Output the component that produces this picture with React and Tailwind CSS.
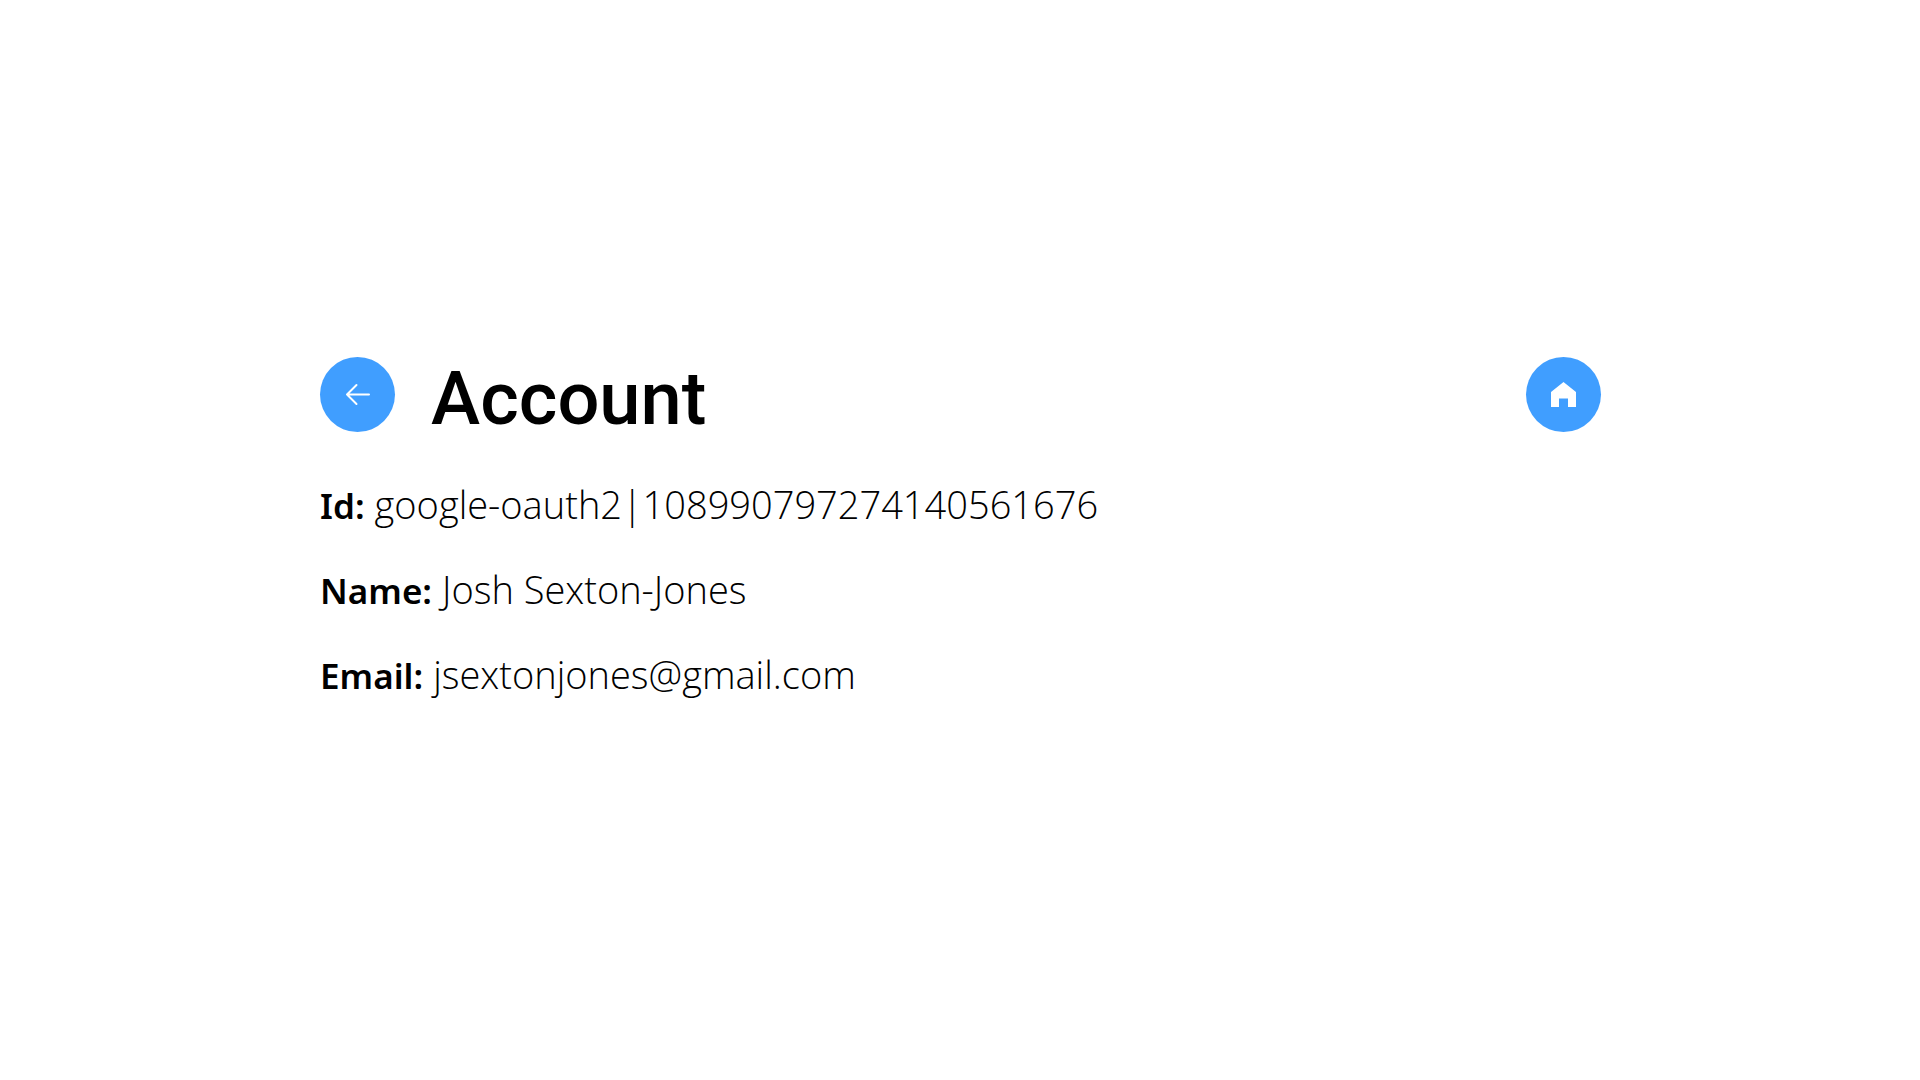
const details = [
  { label: 'Id:', value: 'google-oauth2|108990797274140561676' },
  { label: 'Name:', value: 'Josh Sexton-Jones' },
  { label: 'Email:', value: 'jsextonjones@gmail.com' },
];

function RoundButton({ label, children }) {
  return (
    <button
      type="button"
      aria-label={label}
      className="flex size-[75px] shrink-0 items-center justify-center rounded-full bg-[#409eff] text-white"
    >
      {children}
    </button>
  );
}

export default function App() {
  return (
    <main className="flex min-h-screen flex-col justify-center bg-white font-['Open_Sans',sans-serif] text-black">
      <div className="ml-[16.67%] mr-[16.62%] pb-6">
        <header className="flex items-center">
          <RoundButton label="Back">
            <svg viewBox="0 0 25 25" className="size-[25px]" fill="none" stroke="currentColor" strokeWidth="2" strokeLinecap="round" strokeLinejoin="round" aria-hidden="true">
              <path d="M24 12.5H2M11.5 3L2 12.5L11.5 22" />
            </svg>
          </RoundButton>
          <h1 className="ml-9 flex-1 pt-2 font-['Roboto',sans-serif] text-[74px] leading-[67px] font-medium">Account</h1>
          <RoundButton label="Home">
            <svg viewBox="0 0 25 25" className="size-[25px]" fill="currentColor" aria-hidden="true">
              <path d="M12.5 0L25 10V25H17V16.5H8V25H0V10Z" />
            </svg>
          </RoundButton>
        </header>
        <dl className="mt-12 flex flex-col gap-[35px] text-[38px] leading-[49px]">
          {details.map(({ label, value }) => (
            <div key={label} className="flex items-baseline gap-2.5">
              <dt className="font-['Noto_Sans',sans-serif] text-[35px] font-semibold">{label}</dt>
              <dd className="font-light">{value}</dd>
            </div>
          ))}
        </dl>
      </div>
    </main>
  );
}
